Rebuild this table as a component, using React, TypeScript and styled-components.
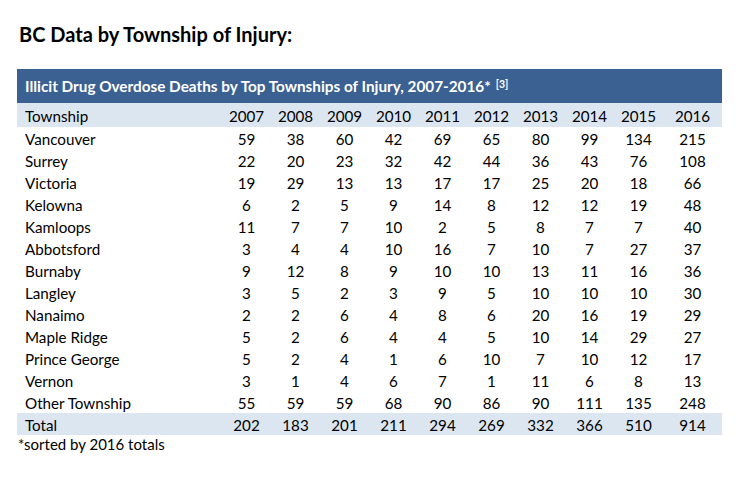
import React from 'react'
import styled, { createGlobalStyle } from 'styled-components'

const GlobalStyle = createGlobalStyle`
  html, body {
    margin: 0;
    padding: 0;
    background: #ffffff;
  }
  body {
    font-family: Lato, "Open Sans", "Liberation Sans", sans-serif;
    color: #000000;
  }
`

const Page = styled.div`
  width: 748px;
  height: 479px;
  padding: 22px 0 0 17px;
  box-sizing: border-box;
`

const Title = styled.h2`
  margin: 0 0 23px 2px;
  font-size: 20px;
  line-height: 24px;
  font-weight: 700;
`

const Table = styled.div`
  width: 705px;
  display: grid;
  grid-template-columns: 205px repeat(9, 49px) 59px;
`

const Caption = styled.div`
  grid-column: 1 / -1;
  height: 34px;
  background: #3b6193;
  color: #ffffff;
  font-size: 15.3px;
  font-weight: 700;
  display: flex;
  align-items: center;
  padding: 0 8px;
  sup {
    font-size: 10.5px;
    margin-left: 5px;
    position: relative;
    top: -2px;
  }
`

const Row = styled.div<{ $shaded?: boolean; $tall?: boolean }>`
  display: contents;
  & > div {
    height: ${p => (p.$tall ? 24 : 22)}px;
    background: ${p => (p.$shaded ? '#dce6f1' : 'transparent')};
  }
`

const Cell = styled.div<{ $name?: boolean }>`
  display: flex;
  align-items: center;
  justify-content: ${p => (p.$name ? 'flex-start' : 'center')};
  padding: ${p => (p.$name ? '1px 0 0 8px' : '1px 0 0 0')};
  box-sizing: border-box;
  font-size: 15.2px;
  white-space: nowrap;
`

const Note = styled.div`
  font-size: 15px;
  line-height: 18px;
  margin-left: 1px;
`

const years = [2007, 2008, 2009, 2010, 2011, 2012, 2013, 2014, 2015, 2016]

const rows: [string, number[]][] = [
  ['Vancouver', [59, 38, 60, 42, 69, 65, 80, 99, 134, 215]],
  ['Surrey', [22, 20, 23, 32, 42, 44, 36, 43, 76, 108]],
  ['Victoria', [19, 29, 13, 13, 17, 17, 25, 20, 18, 66]],
  ['Kelowna', [6, 2, 5, 9, 14, 8, 12, 12, 19, 48]],
  ['Kamloops', [11, 7, 7, 10, 2, 5, 8, 7, 7, 40]],
  ['Abbotsford', [3, 4, 4, 10, 16, 7, 10, 7, 27, 37]],
  ['Burnaby', [9, 12, 8, 9, 10, 10, 13, 11, 16, 36]],
  ['Langley', [3, 5, 2, 3, 9, 5, 10, 10, 10, 30]],
  ['Nanaimo', [2, 2, 6, 4, 8, 6, 20, 16, 19, 29]],
  ['Maple Ridge', [5, 2, 6, 4, 4, 5, 10, 14, 29, 27]],
  ['Prince George', [5, 2, 4, 1, 6, 10, 7, 10, 12, 17]],
  ['Vernon', [3, 1, 4, 6, 7, 1, 11, 6, 8, 13]],
  ['Other Township', [55, 59, 59, 68, 90, 86, 90, 111, 135, 248]],
]

const totals = [202, 183, 201, 211, 294, 269, 332, 366, 510, 914]

export default function App() {
  return (
    <Page>
      <GlobalStyle />
      <Title>BC Data by Township of Injury:</Title>
      <Table>
        <Caption>
          Illicit Drug Overdose Deaths by Top Townships of Injury, 2007-2016*<sup>[3]</sup>
        </Caption>
        <Row $shaded $tall>
          <Cell $name>Township</Cell>
          {years.map(y => (
            <Cell key={y}>{y}</Cell>
          ))}
        </Row>
        {rows.map(([name, vals]) => (
          <Row key={name}>
            <Cell $name>{name}</Cell>
            {vals.map((v, i) => (
              <Cell key={i}>{v}</Cell>
            ))}
          </Row>
        ))}
        <Row $shaded>
          <Cell $name>Total</Cell>
          {totals.map((v, i) => (
            <Cell key={i}>{v}</Cell>
          ))}
        </Row>
      </Table>
      <Note>*sorted by 2016 totals</Note>
    </Page>
  )
}
